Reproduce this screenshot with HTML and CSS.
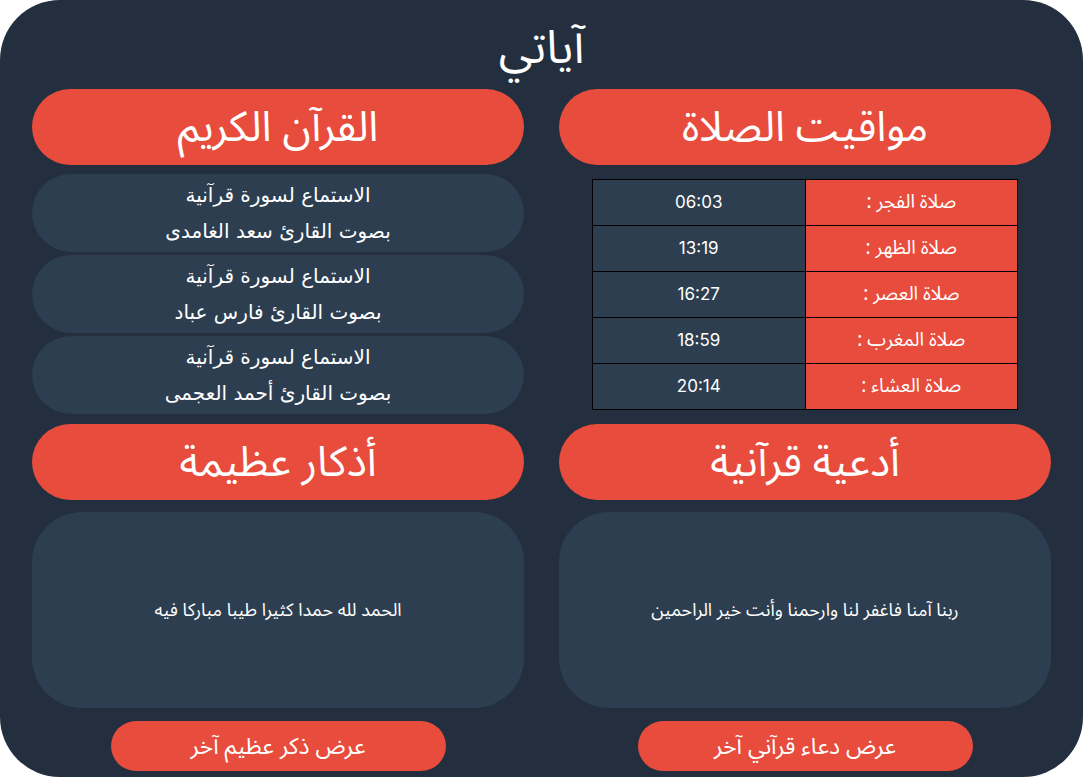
FILE: index.html
```html
<!DOCTYPE html>
<html lang="ar" dir="rtl">
<head>
<meta charset="utf-8">
<title>آياتي</title>
<link rel="stylesheet" href="styles.css">
</head>
<body>
<main class="app">
  <h1 class="title">آياتي</h1>
  <div class="columns">
    <section class="col">
      <h2 class="pill-head">مواقيت الصلاة</h2>
      <div class="block">
        <table class="prayers">
          <tr><td class="name">صلاة الفجر :</td><td class="time">06:03</td></tr>
          <tr><td class="name">صلاة الظهر :</td><td class="time">13:19</td></tr>
          <tr><td class="name">صلاة العصر :</td><td class="time">16:27</td></tr>
          <tr><td class="name">صلاة المغرب :</td><td class="time">18:59</td></tr>
          <tr><td class="name">صلاة العشاء :</td><td class="time">20:14</td></tr>
        </table>
      </div>
      <h2 class="pill-head second">أدعية قرآنية</h2>
      <div class="card"><p>ربنا آمنا فاغفر لنا وارحمنا وأنت خير الراحمين</p></div>
      <button class="btn">عرض دعاء قرآني آخر</button>
    </section>
    <section class="col">
      <h2 class="pill-head">القرآن الكريم</h2>
      <div class="block list">
        <a class="reciter"><p>الاستماع لسورة قرآنية<br>بصوت القارئ سعد الغامدى</p></a>
        <a class="reciter"><p>الاستماع لسورة قرآنية<br>بصوت القارئ فارس عباد</p></a>
        <a class="reciter"><p>الاستماع لسورة قرآنية<br>بصوت القارئ أحمد العجمى</p></a>
      </div>
      <h2 class="pill-head second">أذكار عظيمة</h2>
      <div class="card"><p>الحمد لله حمدا كثيرا طيبا مباركا فيه</p></div>
      <button class="btn">عرض ذكر عظيم آخر</button>
    </section>
  </div>
</main>
</body>
</html>
```
FILE: styles.css
```css
html, body {
  margin: 0;
  padding: 0;
  background: #ffffff;
}
body {
  font-family: "Noto Sans Arabic", "Noto Sans", "DejaVu Sans", sans-serif;
  color: #ffffff;
}
.app {
  width: 1083px;
  height: 777px;
  box-sizing: border-box;
  background: #232f3e;
  border-radius: 60px;
  padding: 0 32px;
}
.title {
  margin: 0;
  height: 89px;
  display: flex;
  align-items: flex-start;
  justify-content: center;
  font-size: 46px;
  font-weight: 400;
  line-height: normal;
}
.columns {
  display: grid;
  grid-template-columns: 1fr 1fr;
  column-gap: 35px;
}
.col {
  display: flex;
  flex-direction: column;
}
.pill-head {
  margin: 0;
  height: 76px;
  border-radius: 38px;
  background: #e74c3c;
  display: flex;
  align-items: center;
  justify-content: center;
  font-size: 42px;
  font-weight: 400;
  line-height: normal;
}
.pill-head.second {
  margin-top: 10px;
}
.block {
  height: 240px;
  margin-top: 9px;
  display: flex;
  flex-direction: column;
  justify-content: center;
  align-items: center;
}
.list {
  align-items: stretch;
  gap: 3px;
}
.reciter {
  height: 78px;
  border-radius: 39px;
  background: #2c3e50;
  display: flex;
  align-items: center;
  justify-content: center;
}
.reciter p {
  margin: 0;
  font-family: "DejaVu Sans", sans-serif;
  font-size: 20px;
  line-height: 36px;
  text-align: center;
}
.prayers {
  width: 426px;
  border-collapse: collapse;
  border: 1px solid #000;
}
.prayers td {
  border: 1px solid #000;
  height: 45px;
  padding: 0;
  text-align: center;
  width: 50%;
}
.prayers .name {
  background: #e74c3c;
  font-size: 19px;
}
.prayers .time {
  background: #2c3e50;
  font-family: "Inter", "Roboto", sans-serif;
  font-size: 17px;
}
.card {
  margin-top: 12px;
  height: 196px;
  border-radius: 50px;
  background: #2c3e50;
  display: flex;
  align-items: center;
  justify-content: center;
}
.card p {
  margin: 0;
  font-size: 18px;
}
.btn {
  margin-top: 13px;
  align-self: center;
  width: 335px;
  height: 50px;
  border: none;
  border-radius: 25px;
  background: #e74c3c;
  color: #ffffff;
  font-family: inherit;
  font-size: 23px;
  padding: 0;
}
```
